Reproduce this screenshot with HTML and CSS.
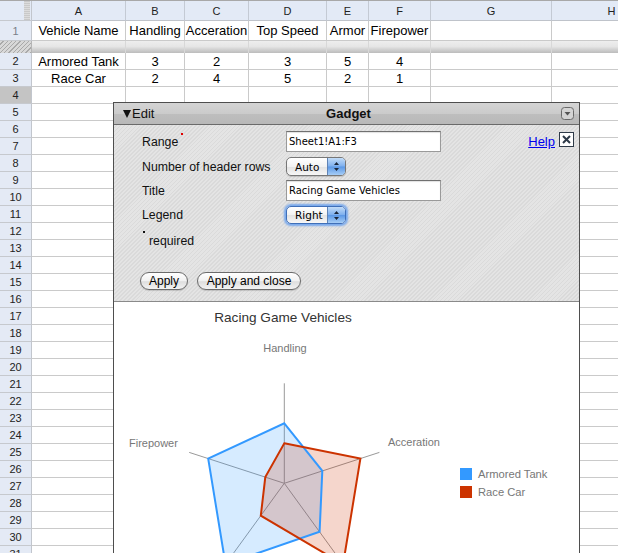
FILE: index.html
```html
<!DOCTYPE html>
<html>
<head>
<meta charset="utf-8">
<link rel="stylesheet" href="styles.css">
</head>
<body>
<div class="sheet">
  <div class="row hdr"><div class="rh corner"></div><div>A</div><div>B</div><div>C</div><div>D</div><div>E</div><div>F</div><div>G</div><div>H</div></div>
  <div class="row r-first"><div class="rh dim">1</div><div>Vehicle Name</div><div>Handling</div><div>Acceration</div><div>Top Speed</div><div>Armor</div><div>Firepower</div><div></div><div></div></div>
  <div class="row band"><div class="rh hatch"></div><div></div><div></div><div></div><div></div><div></div><div></div><div></div><div></div></div>
  <div class="row"><div class="rh">2</div><div>Armored Tank</div><div>3</div><div>2</div><div>3</div><div>5</div><div>4</div><div></div><div></div></div>
  <div class="row"><div class="rh">3</div><div>Race Car</div><div>2</div><div>4</div><div>5</div><div>2</div><div>1</div><div></div><div></div></div>
  <div class="row"><div class="rh sel-row">4</div><div></div><div></div><div></div><div></div><div></div><div></div><div></div><div></div></div>
  <div class="row"><div class="rh">5</div><div></div><div></div><div></div><div></div><div></div><div></div><div></div><div></div></div>
  <div class="row"><div class="rh">6</div><div></div><div></div><div></div><div></div><div></div><div></div><div></div><div></div></div>
  <div class="row"><div class="rh">7</div><div></div><div></div><div></div><div></div><div></div><div></div><div></div><div></div></div>
  <div class="row"><div class="rh">8</div><div></div><div></div><div></div><div></div><div></div><div></div><div></div><div></div></div>
  <div class="row"><div class="rh">9</div><div></div><div></div><div></div><div></div><div></div><div></div><div></div><div></div></div>
  <div class="row"><div class="rh">10</div><div></div><div></div><div></div><div></div><div></div><div></div><div></div><div></div></div>
  <div class="row"><div class="rh">11</div><div></div><div></div><div></div><div></div><div></div><div></div><div></div><div></div></div>
  <div class="row"><div class="rh">12</div><div></div><div></div><div></div><div></div><div></div><div></div><div></div><div></div></div>
  <div class="row"><div class="rh">13</div><div></div><div></div><div></div><div></div><div></div><div></div><div></div><div></div></div>
  <div class="row"><div class="rh">14</div><div></div><div></div><div></div><div></div><div></div><div></div><div></div><div></div></div>
  <div class="row"><div class="rh">15</div><div></div><div></div><div></div><div></div><div></div><div></div><div></div><div></div></div>
  <div class="row"><div class="rh">16</div><div></div><div></div><div></div><div></div><div></div><div></div><div></div><div></div></div>
  <div class="row"><div class="rh">17</div><div></div><div></div><div></div><div></div><div></div><div></div><div></div><div></div></div>
  <div class="row"><div class="rh">18</div><div></div><div></div><div></div><div></div><div></div><div></div><div></div><div></div></div>
  <div class="row"><div class="rh">19</div><div></div><div></div><div></div><div></div><div></div><div></div><div></div><div></div></div>
  <div class="row"><div class="rh">20</div><div></div><div></div><div></div><div></div><div></div><div></div><div></div><div></div></div>
  <div class="row"><div class="rh">21</div><div></div><div></div><div></div><div></div><div></div><div></div><div></div><div></div></div>
  <div class="row"><div class="rh">22</div><div></div><div></div><div></div><div></div><div></div><div></div><div></div><div></div></div>
  <div class="row"><div class="rh">23</div><div></div><div></div><div></div><div></div><div></div><div></div><div></div><div></div></div>
  <div class="row"><div class="rh">24</div><div></div><div></div><div></div><div></div><div></div><div></div><div></div><div></div></div>
  <div class="row"><div class="rh">25</div><div></div><div></div><div></div><div></div><div></div><div></div><div></div><div></div></div>
  <div class="row"><div class="rh">26</div><div></div><div></div><div></div><div></div><div></div><div></div><div></div><div></div></div>
  <div class="row"><div class="rh">27</div><div></div><div></div><div></div><div></div><div></div><div></div><div></div><div></div></div>
  <div class="row"><div class="rh">28</div><div></div><div></div><div></div><div></div><div></div><div></div><div></div><div></div></div>
  <div class="row"><div class="rh">29</div><div></div><div></div><div></div><div></div><div></div><div></div><div></div><div></div></div>
  <div class="row"><div class="rh">30</div><div></div><div></div><div></div><div></div><div></div><div></div><div></div><div></div></div>
  <div class="row"><div class="rh">31</div><div></div><div></div><div></div><div></div><div></div><div></div><div></div><div></div></div>
</div>

<div class="gadget">
  <div class="ghead">
    <div class="edit"><svg class="tri" width="8" height="8" viewBox="0 0 8 8"><path d="M0 0H8L4 8Z" fill="#111"/></svg><span>Edit</span></div>
    <div class="gtitle">Gadget</div>
    <div class="gmenu"><svg width="13" height="13" viewBox="0 0 13 13"><rect x=".5" y=".5" width="12" height="12" rx="3" fill="#d4d4d4" stroke="#6a6a6a"/><path d="M3.5 5H9.5L6.5 8.5Z" fill="#555"/></svg></div>
  </div>
  <div class="form">
    <div class="frow r1">
      <div class="lbl"><span>Range</span><span class="dot red"></span></div>
      <div class="inp">Sheet1!A1:F3</div>
      <a class="help" href="#">Help</a>
      <svg class="close" width="15" height="15" viewBox="0 0 15 15"><rect x=".5" y=".5" width="14" height="14" fill="#fff" stroke="#2e3a48"/><path d="M4 4L11 11M11 4L4 11" stroke="#2e3a48" stroke-width="2"/></svg>
    </div>
    <div class="frow r2">
      <div class="lbl"><span>Number of header rows</span></div>
      <div class="sel"><span class="stxt">Auto</span><span class="sarr"><svg width="7" height="11" viewBox="0 0 7 11"><path d="M3.5 1L6 4H1Z M3.5 10L6 7H1Z" fill="#1b2638"/></svg></span></div>
    </div>
    <div class="frow r3">
      <div class="lbl"><span>Title</span></div>
      <div class="inp">Racing Game Vehicles</div>
    </div>
    <div class="frow r4">
      <div class="lbl"><span>Legend</span></div>
      <div class="sel focus"><span class="stxt">Right</span><span class="sarr"><svg width="7" height="11" viewBox="0 0 7 11"><path d="M3.5 1L6 4H1Z M3.5 10L6 7H1Z" fill="#1b2638"/></svg></span></div>
    </div>
    <div class="frow req">
      <span class="dot blk"></span><span>required</span>
    </div>
    <div class="frow btns">
      <button class="btn b1">Apply</button>
      <button class="btn b2">Apply and close</button>
    </div>
  </div>
  <svg class="chart" width="465" height="251" viewBox="114 302 465 251">
    <text class="ctitle" x="283" y="322" text-anchor="middle">Racing Game Vehicles</text>
    <text class="clab" x="285" y="352" text-anchor="middle">Handling</text>
    <text class="clab" x="388" y="446">Acceration</text>
    <text class="clab" x="129" y="447">Firepower</text>
    <g stroke="#999" stroke-width="1">
      <line x1="284.3" y1="483.3" x2="284.3" y2="383.3"/>
      <line x1="284.3" y1="483.3" x2="379.4" y2="452.4"/>
      <line x1="284.3" y1="483.3" x2="343.1" y2="564.2"/>
      <line x1="284.3" y1="483.3" x2="225.5" y2="564.2"/>
      <line x1="284.3" y1="483.3" x2="189.2" y2="452.4"/>
    </g>
    <polygon points="284.3,423.3 322.3,470.9 319.6,531.8 225.5,564.2 208.2,458.6" fill="#3399ff" fill-opacity="0.2"/>
    <polygon points="284.3,443.3 360.4,458.6 343.1,564.2 260.8,515.7 265.3,477.1" fill="#cc3300" fill-opacity="0.2"/>
    <polygon points="284.3,423.3 322.3,470.9 319.6,531.8 225.5,564.2 208.2,458.6" fill="none" stroke="#3399ff" stroke-width="2" stroke-linejoin="miter"/>
    <polygon points="284.3,443.3 360.4,458.6 343.1,564.2 260.8,515.7 265.3,477.1" fill="none" stroke="#cc3300" stroke-width="2"/>
    <rect x="460" y="468" width="12" height="12" fill="#3399ff"/>
    <text class="leg" x="478" y="478">Armored Tank</text>
    <rect x="460" y="486" width="12" height="12" fill="#cc3300"/>
    <text class="leg" x="478" y="496">Race Car</text>
  </svg>
</div>
</body>
</html>
```

FILE: styles.css
```css
html, body {
  margin: 0;
  padding: 0;
}
body {
  width: 618px;
  height: 553px;
  overflow: hidden;
  position: relative;
  background: #fff;
  font-family: "Liberation Sans", Arial, sans-serif;
  color: #000;
}

/* ---------- spreadsheet ---------- */
.sheet {
  display: flex;
  flex-direction: column;
  width: 672px;
}
.row {
  display: grid;
  grid-template-columns: 32px 94px 59px 64px 78px 42px 62px 121px 120px;
  height: 17px;
  box-sizing: border-box;
}
.row > div {
  box-sizing: border-box;
  border-right: 1px solid #cacaca;
  border-bottom: 1px solid #cacaca;
  display: flex;
  align-items: center;
  justify-content: center;
  font-size: 13px;
  white-space: nowrap;
  overflow: hidden;
}
.row > .rh {
  background: #e4eaf5;
  font-size: 11px;
  color: #222;
  border-right-color: #c2c6cd;
  border-bottom-color: #c6c9ce;
}
.row > .rh.dim {
  color: #7a7f88;
}
.row > .rh.sel-row {
  background: #c4c4c4;
  color: #222;
}
.hdr {
  height: 21px;
  border-top: 1px solid #a8a8a8;
}
.hdr > div {
  background: #e3eaf6;
  font-size: 11px;
  color: #222;
  border-right-color: #c4cad4;
  border-bottom-color: #bfc3ca;
}
.hdr > .corner {
  background:
    repeating-linear-gradient(0deg, #c9c9c9 0 1px, #dcdcdc 1px 2px) 24px 0 / 6px 100% no-repeat,
    #e3eaf6;
}
.r-first {
  height: 20px;
}
.band {
  height: 12px;
  background: linear-gradient(#eeeeee 0%, #e6e6e6 45%, #d2d2d2 70%, #bcbcbc 100%);
}
.band > div {
  border-bottom: none;
  border-right-color: #d8d8d8;
}
.band > .rh.hatch {
  background: repeating-linear-gradient(135deg, #d8d8d8 0 2px, #a9a9a9 2px 3px);
  border-right-color: #b5b5b5;
}

/* ---------- gadget ---------- */
.gadget {
  position: absolute;
  left: 113px;
  top: 102px;
  width: 467px;
  height: 470px;
  box-sizing: border-box;
  border: 1px solid #4e4e4e;
  background: #fff;
  display: flex;
  flex-direction: column;
}
.ghead {
  height: 22px;
  flex: none;
  box-sizing: border-box;
  border-bottom: 1px solid #6a6a6a;
  background: linear-gradient(#d4d4d4 0%, #cbcbcb 50%, #bebebe 52%, #b8b8b8 100%);
  display: grid;
  grid-template-columns: 1fr auto 1fr;
  align-items: center;
  padding: 0 5px 0 9px;
  font-size: 13px;
  color: #111;
}
.edit {
  display: flex;
  align-items: center;
}
.tri {
  display: block;
  margin-right: 1px;
}
.gtitle {
  font-weight: bold;
}
.gmenu {
  display: flex;
  justify-content: flex-end;
}
.gmenu svg {
  display: block;
}

.form {
  height: 177px;
  flex: none;
  box-sizing: border-box;
  border-bottom: 1px solid #8a8a8a;
  padding: 6px 5px 0 28px;
  background: repeating-linear-gradient(135deg, #e4e4e4 0 1.6px, #dadada 1.6px 2.8px);
  display: flex;
  flex-direction: column;
}
.frow {
  display: flex;
  align-items: center;
  flex: none;
}
.r1 { height: 21px; }
.r2 { height: 19px; margin-top: 5px; }
.r3 { height: 21px; margin-top: 4px; }
.r4 { height: 20px; margin-top: 4px; }
.req { height: 16px; margin-top: 8px; font-size: 12.3px; color: #111; }
.btns { height: 18px; margin-top: 23px; margin-left: -2px; gap: 9px; }

.lbl {
  width: 144px;
  flex: none;
  display: flex;
  align-items: center;
  font-size: 12.3px;
  color: #111;
}
.dot {
  display: block;
  width: 2px;
  height: 2px;
  align-self: flex-start;
  margin-top: -2px;
}
.dot.red {
  background: #e00000;
  margin-left: 3px;
}
.dot.blk {
  background: #111;
  margin-right: 4px;
  margin-left: 1px;
}
.inp {
  width: 155px;
  height: 21px;
  flex: none;
  box-sizing: border-box;
  border: 1px solid #9a9a9a;
  border-top-color: #707070;
  background: #fff;
  box-shadow: inset 0 1px 1px rgba(0, 0, 0, 0.12);
  font-family: "DejaVu Sans", sans-serif;
  font-size: 10px;
  color: #000;
  padding-left: 2px;
  display: flex;
  align-items: center;
  white-space: nowrap;
}
.sel {
  width: 60px;
  height: 19px;
  flex: none;
  box-sizing: border-box;
  border: 1px solid #777;
  border-radius: 5px;
  background: linear-gradient(#ffffff 0%, #f2f2f2 50%, #e2e2e2 52%, #f7f7f7 100%);
  display: flex;
  align-items: stretch;
  font-family: "DejaVu Sans", sans-serif;
  font-size: 10.5px;
  color: #000;
  box-shadow: 0 1px 1px rgba(0, 0, 0, 0.15);
}
.sel.focus {
  height: 18px;
  border-color: #3f6fb8;
  box-shadow: 0 0 2px 2px #79a9ec;
}
.stxt {
  flex: 1;
  padding-left: 8px;
  display: flex;
  align-items: center;
}
.sarr {
  width: 17px;
  border-left: 1px solid #5f83b5;
  border-radius: 0 4px 4px 0;
  background: linear-gradient(#c2dcf8 0%, #7fb0ee 48%, #5b98e6 52%, #a6cdf6 100%);
  display: flex;
  align-items: center;
  justify-content: center;
}
.sarr svg {
  display: block;
}
.help {
  margin-left: auto;
  font-size: 13px;
  color: #0000ee;
  text-decoration: underline;
}
.close {
  display: block;
  align-self: flex-start;
  margin-top: 1px;
  margin-left: 4px;
  flex: none;
}
.btn {
  height: 18px;
  box-sizing: border-box;
  border: 1px solid #6b6b6b;
  border-radius: 9px;
  background: linear-gradient(#ffffff 0%, #f1f1f1 50%, #dedede 54%, #f3f3f3 100%);
  font-family: "Liberation Sans", Arial, sans-serif;
  font-size: 12px;
  color: #000;
  padding: 0;
  margin: 0;
  display: flex;
  align-items: center;
  justify-content: center;
  box-shadow: 0 1px 1px rgba(0, 0, 0, 0.15);
}
.b1 { width: 48px; }
.b2 { width: 104px; }

.chart {
  display: block;
  flex: none;
}
.ctitle {
  font-family: "Liberation Sans", Arial, sans-serif;
  font-size: 13.6px;
  fill: #333;
}
.clab {
  font-family: "Liberation Sans", Arial, sans-serif;
  font-size: 11px;
  fill: #777;
}
.leg {
  font-family: "Liberation Sans", Arial, sans-serif;
  font-size: 11.2px;
  fill: #777;
}
```
